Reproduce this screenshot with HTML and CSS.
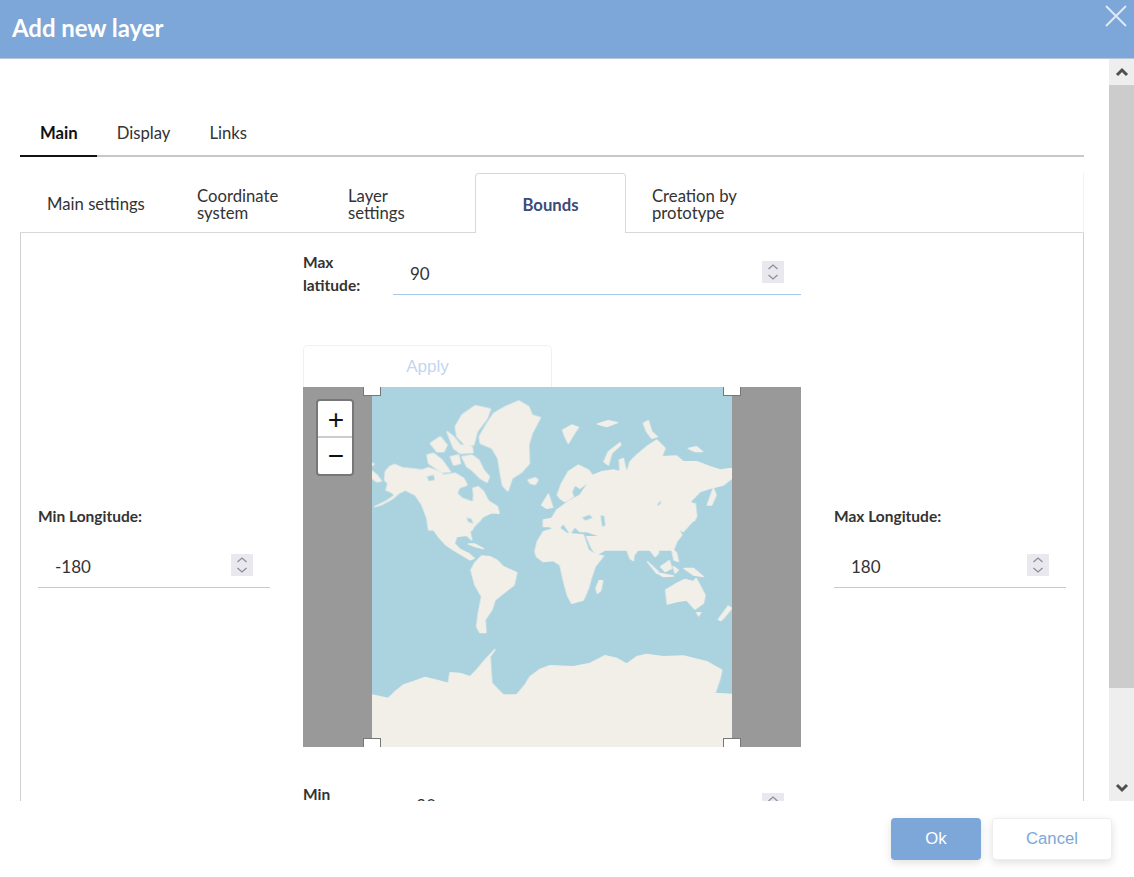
FILE: index.html
```html
<!DOCTYPE html>
<html lang="en">
<head>
  <meta charset="UTF-8">
  <title>Add new layer</title>
  <link rel="stylesheet" href="styles.css">
</head>
<body>
  <div class="dialog">
    <header class="dialog-header">
      <h1>Add new layer</h1>
      <svg class="close-icon" viewBox="0 0 22 22"><path d="M1 1L21 21M21 1L1 21"/></svg>
    </header>

    <div class="dialog-middle">
      <div class="dialog-content">
        <!-- Top tabs -->
        <nav class="main-tabs">
          <div class="main-tab active">Main</div>
          <div class="main-tab">Display</div>
          <div class="main-tab">Links</div>
        </nav>

        <!-- Second level tabs -->
        <nav class="sub-tabs">
          <div class="sub-tab tab-settings">Main settings</div>
          <div class="sub-tab tab-coords">Coordinate system</div>
          <div class="sub-tab tab-layer">Layer settings</div>
          <div class="sub-tab active">Bounds</div>
          <div class="sub-tab tab-proto">Creation by prototype</div>
        </nav>

        <div class="panel">
          <div class="side-field">
            <label>Min Longitude:</label>
            <div class="num-input">
              <span>-180</span>
              <span class="spinner"><svg viewBox="0 0 22 22"><path d="M6.5 8L11 4L15.500 8M6.500 14L11 18L15.500 14"/></svg></span>
            </div>
          </div>

          <div class="center-col">
            <div class="inline-field">
              <label>Max latitude:</label>
              <div class="num-input focused">
                <span>90</span>
                <span class="spinner"><svg viewBox="0 0 22 22"><path d="M6.5 8L11 4L15.500 8M6.500 14L11 18L15.500 14"/></svg></span>
              </div>
            </div>

            <div class="apply-btn">Apply</div>

            <div class="map">
              <svg class="world" viewBox="0 0 1080 1080">
                <rect width="1080" height="1080" fill="#aad3df"/>
                <g class="land">
                  <!-- traced from the top left part of the map -->
                  <g transform="translate(0 24)">
                    <path d="M0,205L6,207L0,212ZM0,228L15,240L28,258L15,260L0,250Z"/>
                    <path d="M40,230L52,215L68,208L90,218L125,222L150,225L170,218L195,228L215,240L250,235L275,250L285,270L262,278L255,295L270,310L298,320L303,335L305,300L303,280L318,275L335,290L345,310L360,335L380,350L360,352L340,350L325,375L305,395L300,405L170,405L165,370L150,330L130,300L100,285L80,295L60,312L30,328L8,335L40,320L70,300L55,290L42,285L48,265L38,255Z"/>
                    <path d="M270,185L300,180L320,195L335,225L352,245L345,262L325,250L300,225L285,215Z"/>
                    <path d="M165,180L185,175L210,195L235,230L210,232L185,215L170,205Z"/>
                    <path d="M235,185L260,180L265,205L245,210Z"/>
                    <path d="M175,145L205,125L225,150L215,170L195,170Z"/>
                    <path d="M225,110L245,125L265,150L300,155L303,172L265,175L245,160L235,135Z"/>
                    <path d="M250,95L270,60L310,32L355,42L345,70L315,110L305,150L280,150L255,125Z"/>
                    <path d="M322,125L345,85L365,55L400,35L440,18L470,35L480,60L505,68L480,115L470,150L472,205L450,230L420,250L408,288L392,272L385,235L378,190L360,160L325,145Z"/>
                    <path d="M468,255L490,248L498,255L490,268L475,265Z"/>
                  </g>
                  <!-- top right part -->
                  <g transform="translate(474 99)">
                    <path d="M98,30L125,15L145,22L130,45L115,70L105,50Z"/>
                    <path d="M203,12L235,2L262,8L230,20Z"/>
                    <path d="M340,10L355,2L365,35L382,50L365,55L350,35Z"/>
                    <path d="M222,125L235,95L270,68L272,75L245,100L235,135Z"/>
                    <path d="M475,85L500,80L518,95L495,95Z"/>
                    <path d="M82,225L95,190L115,155L145,135L175,150L190,170L170,190L150,205L135,195L125,215L130,230L105,245L90,235Z"/>
                    <path d="M40,320L40,300L65,295L80,270L115,245L150,225L170,195L190,165L215,155L250,150L270,155L268,120L280,115L290,160L300,125L320,105L350,80L380,60L405,85L395,110L440,108L460,125L500,125L540,140L570,150L606,145L606,175L580,195L540,205L510,215L480,245L495,255L495,300L470,315L445,325L455,345L440,365L430,390L215,390L215,350L170,335L150,335L135,320L120,340L100,310L80,335L60,320Z"/>
                    <path d="M35,255L55,222L68,262L50,265Z"/>
                    <path d="M532,255L550,205L558,225L545,255Z"/>
                    <path d="M445,325L490,285L495,250L500,290L460,335Z"/>
                  </g>
                  <!-- bottom right part -->
                  <g transform="translate(474 399)">
                    <path d="M15,95L22,65L40,35L85,22L110,40L160,45L175,90L198,105L220,108L195,140L185,170L175,205L160,240L125,250L112,225L100,180L90,135L70,122L40,125L20,110Z"/>
                    <path d="M198,205L207,182L218,182L212,212L202,220Z"/>
                    <path d="M170,50L210,50L240,70L225,90L200,105L185,85Z"/>
                    <path d="M215,40L235,55L265,65L285,75L300,115L310,122L312,105L335,75L360,90L375,110L385,100L385,85L420,70L435,40L430,0L220,0Z"/>
                    <path d="M352,125L385,155L380,160Z"/>
                    <path d="M380,158L430,168L400,170Z"/>
                    <path d="M392,140L418,122L425,145L405,155Z"/>
                    <path d="M430,140L445,150L435,160Z"/>
                    <path d="M425,85L440,100L445,125L432,120Z"/>
                    <path d="M462,145L490,145L520,170L490,165Z"/>
                    <path d="M407,210L440,190L465,178L490,185L498,175L525,225L520,250L495,268L470,240L440,245L412,252Z"/>
                    <path d="M500,278L512,278L506,288Z"/>
                    <path d="M565,298L595,258L605,265L580,295L572,302Z"/>
                  </g>
                  <!-- Americas lower part and Antarctica -->
                  <g transform="translate(-36 9)">
                    <path d="M205,395L235,440L258,465L280,480L305,495L330,510L342,505L325,490L300,478L283,460L290,440L320,436L335,450L330,425L345,395L370,380L395,368L417,370L412,350L380,330L300,340L210,330Z"/>
                    <path d="M325,462L345,462L370,476L345,470Z"/>
                    <path d="M333,540L345,518L365,498L390,500L410,510L430,530L470,548L462,585L432,608L405,630L395,660L375,690L378,728L360,728L350,710L355,670L365,620L345,585Z"/>
                    <path d="M36,915L85,925L105,905L130,885L160,875L195,862L235,872L265,880L270,848L300,850L330,860L350,840L375,810L405,778L390,800L395,880L430,915L470,915L495,885L510,860L540,838L570,827L640,830L690,820L735,797L770,805L800,822L830,800L860,793L910,800L970,798L1040,815L1085,840L1080,865L1065,910L1116,913L1116,1071L36,1071Z"/>
                  </g>
                </g>
                <!-- Inland water -->
                <g class="water">
                  <path d="M165,269L185,264L188,279L170,282Z"/>
                  <path d="M284,392L298,396L304,410L288,404Z"/>
                  <path d="M630,392L652,384L662,392L640,400Z"/>
                  <path d="M686,386L696,386L700,416L690,418Z"/>
                  <path d="M856,352L866,341L867,348L858,357Z"/>
                </g>
              </svg>
              <div class="zoom-control">
                <div class="zoom-btn">+</div>
                <div class="zoom-btn">−</div>
              </div>
              <div class="handle top-left"></div>
              <div class="handle top-right"></div>
              <div class="handle bottom-left"></div>
              <div class="handle bottom-right"></div>
            </div>

            <div class="inline-field bottom">
              <label>Min latitude:</label>
              <div class="num-input">
                <span>-90</span>
                <span class="spinner"><svg viewBox="0 0 22 22"><path d="M6.5 8L11 4L15.500 8M6.500 14L11 18L15.500 14"/></svg></span>
              </div>
            </div>
          </div>

          <div class="side-field">
            <label>Max Longitude:</label>
            <div class="num-input">
              <span>180</span>
              <span class="spinner"><svg viewBox="0 0 22 22"><path d="M6.5 8L11 4L15.500 8M6.500 14L11 18L15.500 14"/></svg></span>
            </div>
          </div>
        </div>
      </div>

      <!-- Scrollbar -->
      <div class="scrollbar">
        <div class="scroll-arrow"><svg viewBox="0 0 14 10"><path d="M2 8L7 3L12 8"/></svg></div>
        <div class="scroll-thumb"></div>
        <div class="scroll-track"></div>
        <div class="scroll-arrow"><svg viewBox="0 0 14 10"><path d="M2 2L7 7L12 2"/></svg></div>
      </div>
    </div>

    <footer class="dialog-footer">
      <button type="button" class="btn-ok">Ok</button>
      <button type="button" class="btn-cancel">Cancel</button>
    </footer>
  </div>
</body>
</html>
```

FILE: styles.css
```css
html, body {
  margin: 0;
  padding: 0;
  background: #fff;
}
body {
  font-family: Lato, Arial, sans-serif;
  color: #333;
}
.dialog {
  width: 1134px;
  height: 877px;
  display: flex;
  flex-direction: column;
  overflow: hidden;
}

.dialog-header {
  flex: none;
  height: 58px;
  padding-left: 12px;
  display: flex;
  align-items: center;
  justify-content: space-between;
  background-color: #7ca7d8;
  border-bottom: 1px solid #b9c6d8;
}
.dialog-header h1 {
  margin: 0 0 4px;
  font-size: 24px;
  font-weight: 700;
  color: #fff;
  letter-spacing: -0.05px;
}
.close-icon {
  width: 22px;
  height: 22px;
  margin: 0 7px 26px 0;
  fill: none;
  stroke: #dfe8f3;
  stroke-width: 2;
}

.dialog-middle {
  flex: none;
  height: 742px;
  display: flex;
}
.dialog-content {
  flex: 1;
  min-width: 0;
  overflow: hidden;
  padding: 56px 25px 0 20px;
}

.main-tabs {
  display: flex;
  height: 40px;
  border-bottom: 2px solid #c8c8cc;
}
.main-tab {
  height: 42px;
  padding: 7px 19px 0 20px;
  box-sizing: border-box;
  font-size: 16.7px;
  line-height: 22px;
  color: #333;
}
.main-tab.active {
  font-weight: 700;
  color: #111;
  border-bottom: 2px solid #111;
}

.sub-tabs {
  display: flex;
  height: 60px;
  box-sizing: border-box;
  margin-top: 16px;
  border-bottom: 1px solid #d8d8d8;
  border-right: 1px solid #f2f2f2;
}
.sub-tab {
  flex: none;
  height: 60px;
  box-sizing: border-box;
  padding: 3px 26px 0 27px;
  display: flex;
  align-items: center;
  font-size: 16.7px;
  line-height: 17px;
  color: #333;
}
.tab-settings {
  width: 150px;
  padding-right: 20px;
}
.tab-coords {
  width: 151px;
}
.tab-layer {
  width: 154px;
  padding-right: 40px;
}
.tab-proto {
  width: 170px;
  padding-left: 26px;
}
.sub-tab.active {
  width: 151px;
  justify-content: center;
  padding: 3px 0 0;
  font-weight: 700;
  color: #3b4a76;
  background: #fff;
  border: 1px solid #d8d8d8;
  border-bottom: none;
  border-radius: 4px 4px 0 0;
}

.panel {
  display: grid;
  grid-template-columns: 232px 498px 232px;
  column-gap: 33px;
  align-items: center;
  align-content: start;
  height: 640px;
  box-sizing: border-box;
  padding: 19px 17px 0;
  border-left: 1px solid #d0d0d0;
  border-right: 1px solid #d0d0d0;
}

label {
  font-size: 15.5px;
  font-weight: 700;
  line-height: 23px;
  color: #333;
}
.side-field label {
  display: block;
  margin-bottom: 17px;
}
.num-input {
  height: 43px;
  box-sizing: border-box;
  padding: 9px 17px 0;
  display: flex;
  justify-content: space-between;
  font-size: 17px;
  line-height: 25px;
  color: #333;
  border-bottom: 1px solid #c4c9d2;
}
.num-input.focused {
  border-bottom-color: #a9c7e8;
}
.spinner {
  width: 22px;
  height: 22px;
  background-color: #e8e8ee;
}
.spinner svg {
  display: block;
  width: 22px;
  height: 22px;
  fill: none;
  stroke: #8d8d98;
  stroke-width: 1.3;
}

.center-col {
  padding-bottom: 14px;
}
.inline-field {
  display: flex;
  height: 43px;
}
.inline-field.bottom {
  margin-top: 37px;
}
.inline-field label {
  flex: none;
  width: 90px;
  margin-top: -1px;
  padding-right: 20px;
  box-sizing: border-box;
}
.inline-field .num-input {
  flex: 1;
}

.apply-btn {
  width: 249px;
  height: 42px;
  margin-top: 50px;
  box-sizing: border-box;
  border: 1px solid #f0f0f0;
  border-bottom: none;
  border-radius: 5px 5px 0 0;
  font-family: "Liberation Sans", Arial, sans-serif;
  font-size: 17px;
  line-height: 41px;
  text-align: center;
  color: #c3d6ee;
}

.map {
  position: relative;
  height: 360px;
  overflow: hidden;
  display: flex;
  justify-content: center;
  background-color: #999;
}
.world {
  display: block;
  width: 360px;
  height: 360px;
}
.land, .water {
  filter: blur(1.2px);
}
.land path {
  fill: #f2efe9;
  stroke: #f2efe9;
  stroke-width: 4;
  stroke-linejoin: round;
}
.water path {
  fill: #aad3df;
}
.zoom-control {
  position: absolute;
  left: 13px;
  top: 12px;
  width: 34px;
  border: 2px solid #777;
  border-radius: 4px;
  overflow: hidden;
}
.zoom-btn {
  height: 35px;
  padding-left: 2px;
  background: #fff;
  font-family: "Liberation Sans", Arial, sans-serif;
  font-size: 28px;
  line-height: 37px;
  text-align: center;
  color: #111;
}
.zoom-btn + .zoom-btn {
  height: 36px;
  line-height: 36px;
  border-top: 2px solid #ccc;
}
.handle {
  position: absolute;
  width: 16px;
  height: 16px;
  background: #fff;
  border: 1px solid #777;
}
.top-left { left: 60px; top: -9px; }
.top-right { left: 420px; top: -9px; }
.bottom-left { left: 60px; bottom: -9px; }
.bottom-right { left: 420px; bottom: -9px; }

.scrollbar {
  flex: none;
  width: 25px;
  display: flex;
  flex-direction: column;
  background-color: #eee;
}
.scroll-arrow {
  flex: none;
  height: 26px;
  display: flex;
  align-items: center;
  justify-content: center;
}
.scroll-arrow svg {
  width: 14px;
  height: 10px;
  fill: none;
  stroke: #505050;
  stroke-width: 3;
}
.scroll-thumb {
  flex: none;
  height: 603px;
  background-color: #ccc;
}
.scroll-track {
  flex: 1;
}

.dialog-footer {
  flex: 1;
  display: flex;
  justify-content: flex-end;
  gap: 11px;
  padding: 17px 22px 0 0;
}
.dialog-footer button {
  height: 42px;
  box-sizing: border-box;
  border-radius: 4px;
  font-family: "Liberation Sans", Arial, sans-serif;
  font-size: 16.7px;
  box-shadow: 0 3px 8px rgba(0, 0, 0, 0.12);
}
.btn-ok {
  width: 90px;
  color: #fff;
  background-color: #7ca7d8;
  border: none;
}
.btn-cancel {
  width: 120px;
  color: #7ca7d8;
  background-color: #fff;
  border: 1px solid #eee;
}
```
